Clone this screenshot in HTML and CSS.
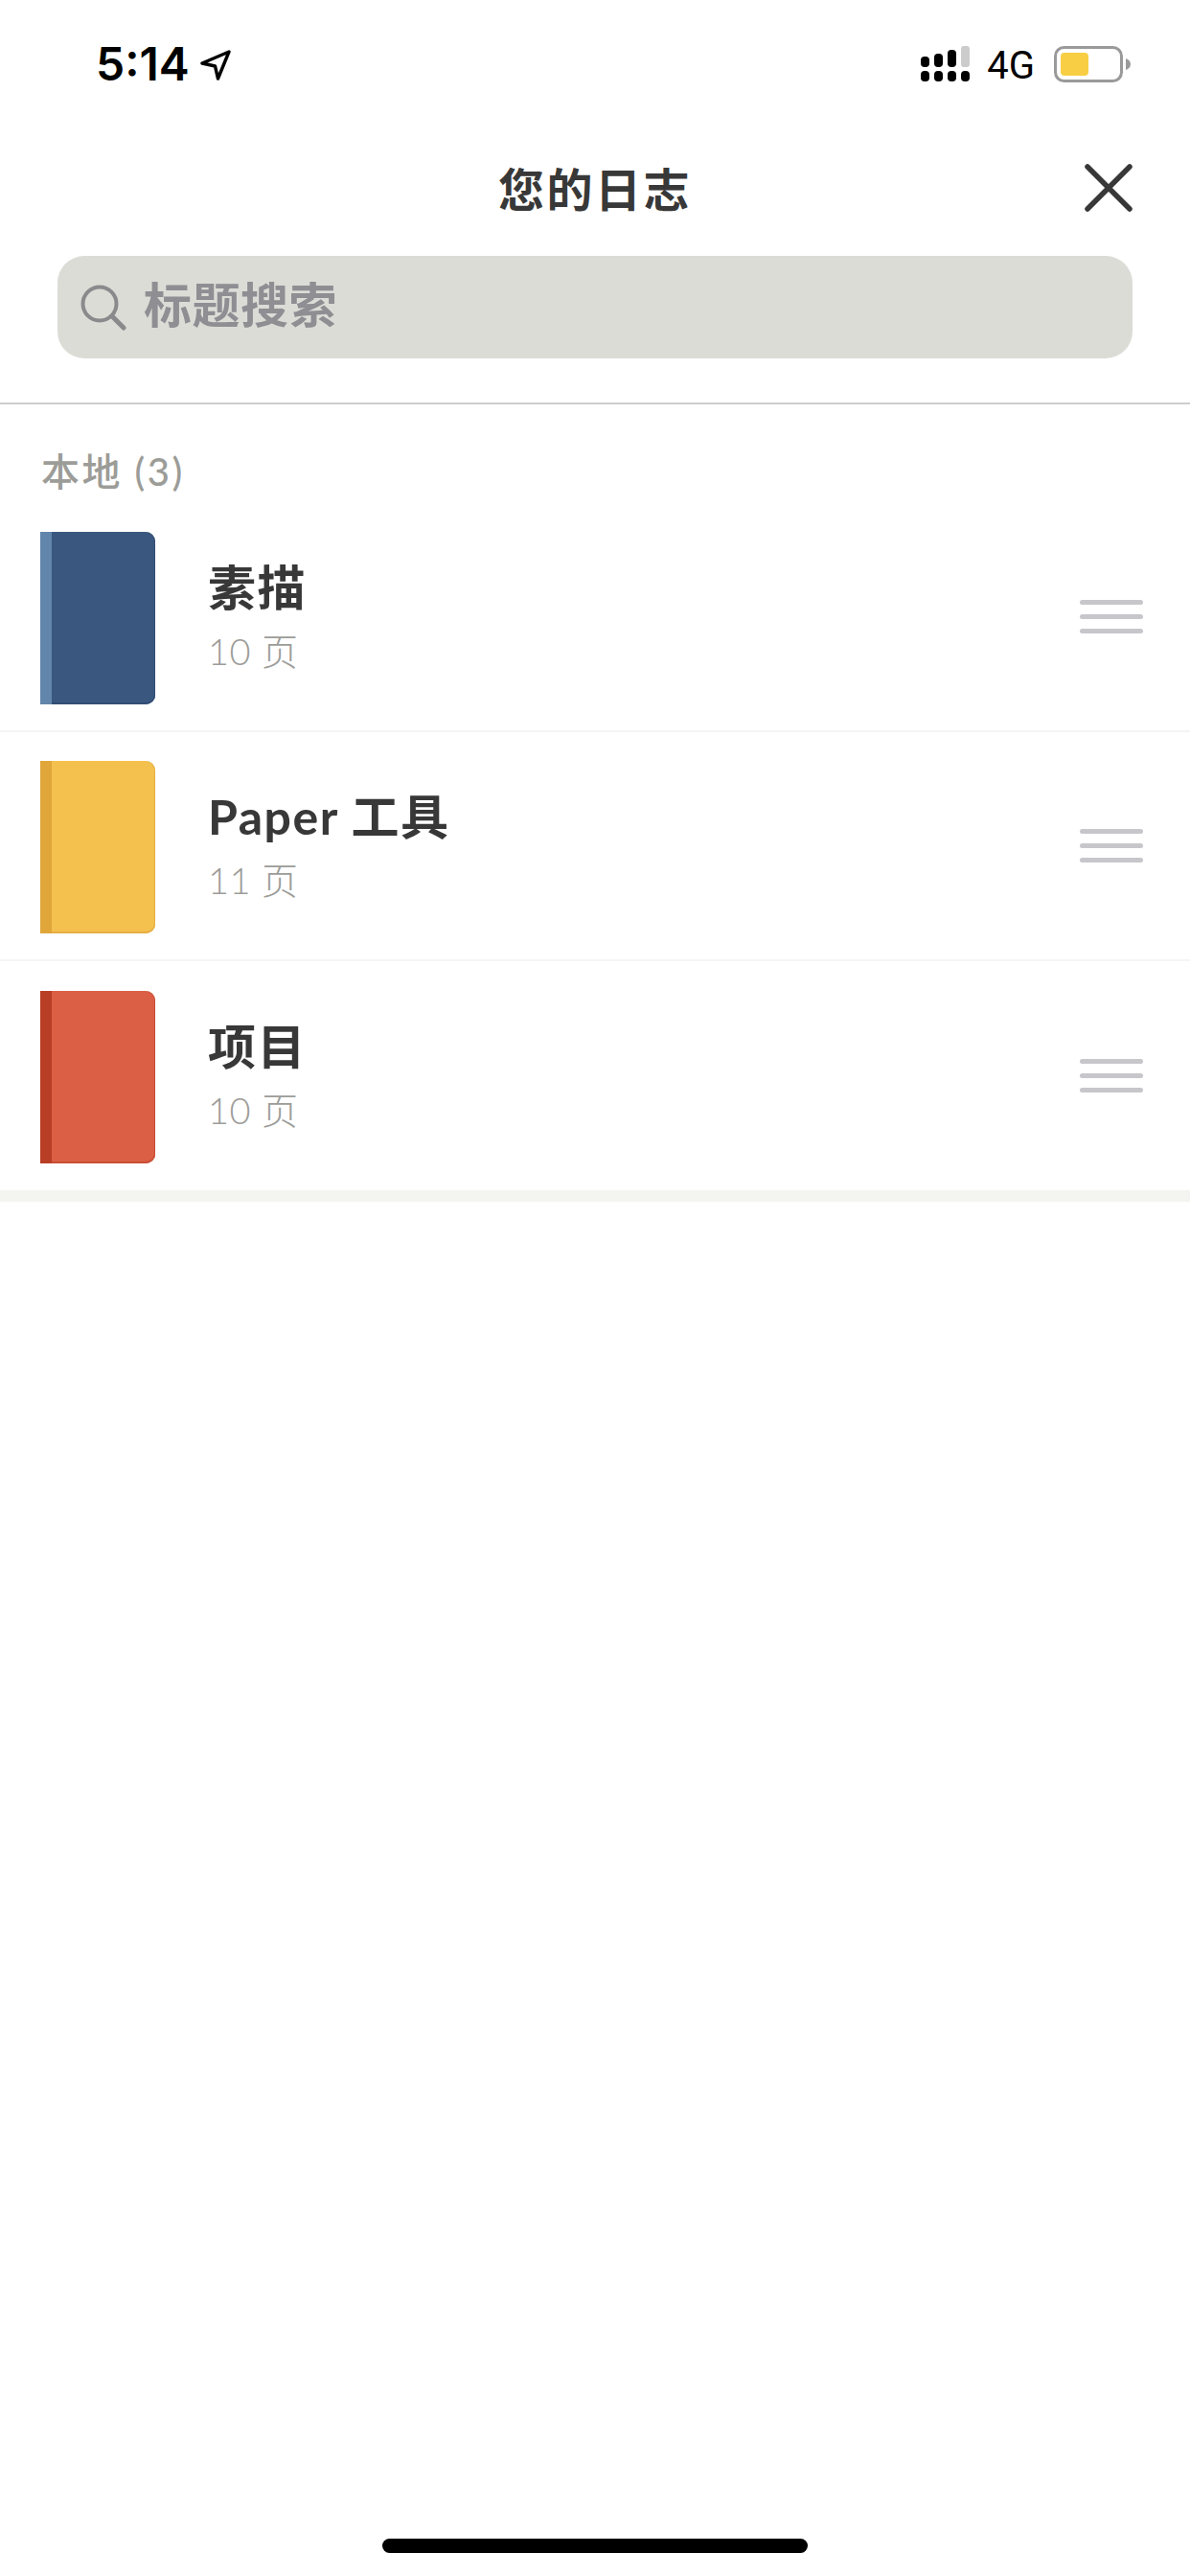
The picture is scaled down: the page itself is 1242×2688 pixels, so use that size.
FILE: index.html
```html
<!DOCTYPE html>
<html lang="zh-CN">
<head>
  <meta charset="UTF-8">
  <meta name="viewport" content="width=device-width, initial-scale=1">
  <title>您的日志</title>
  <link rel="stylesheet" href="styles.css">
</head>
<body>
  <div class="screen">
    <div class="status-bar">
      <div class="status-left">
        <span class="time">5:14</span>
        <svg class="location" width="32" height="32" viewBox="0 0 32 32">
          <path d="M30 2 L2 14 L15.5 17 L18.5 30 Z" fill="none" stroke="#000" stroke-width="3.4" stroke-linejoin="round"/>
        </svg>
      </div>
      <div class="status-right">
        <svg class="signal" width="51" height="38" viewBox="0 0 51 38">
          <rect x="0" y="11" width="9" height="11" rx="4" fill="#000"/>
          <rect x="14" y="8" width="9" height="14" rx="4" fill="#000"/>
          <rect x="28" y="4" width="9" height="18" rx="4" fill="#000"/>
          <rect x="42" y="0" width="9" height="22" rx="3" fill="#ccc"/>
          <rect x="0" y="26" width="9" height="11" rx="4" fill="#000"/>
          <rect x="14" y="26" width="9" height="11" rx="4" fill="#000"/>
          <rect x="28" y="26" width="9" height="11" rx="4" fill="#000"/>
          <rect x="42" y="26" width="9" height="11" rx="4" fill="#000"/>
        </svg>
        <span class="network">4G</span>
        <svg class="battery" width="80" height="38" viewBox="0 0 80 38">
          <rect x="1.5" y="1.5" width="69" height="35" rx="9" fill="#fff" stroke="#9a9a9a" stroke-width="3"/>
          <rect x="7" y="7" width="29" height="24" rx="4" fill="#f8cf44"/>
          <path d="M75 13 C78 14 80 16 80 19 C80 22 78 24 75 25 Z" fill="#9a9a9a"/>
        </svg>
      </div>
    </div>

    <div class="header">
      <span></span>
      <h1 class="title">您的日志</h1>
      <svg class="close" width="50" height="50" viewBox="0 0 50 50">
        <path d="M3 3 L47 47 M47 3 L3 47" stroke="#383838" stroke-width="5.5" stroke-linecap="round"/>
      </svg>
    </div>

    <div class="search">
      <svg class="search-icon" width="48" height="48" viewBox="0 0 48 48">
        <circle cx="20" cy="20" r="17.5" fill="none" stroke="#8a8a8c" stroke-width="4"/>
        <path d="M33 33 L45 45" stroke="#8a8a8c" stroke-width="5" stroke-linecap="round"/>
      </svg>
      <span class="search-text">标题搜索</span>
    </div>

    <div class="section-label">本地 (3)</div>

    <div class="row">
      <div class="book book-blue"></div>
      <div class="info">
        <div class="name">素描</div>
        <div class="pages">10 页</div>
      </div>
      <div class="handle"><i></i><i></i><i></i></div>
    </div>
    <div class="row">
      <div class="book book-yellow"></div>
      <div class="info">
        <div class="name">Paper 工具</div>
        <div class="pages">11 页</div>
      </div>
      <div class="handle"><i></i><i></i><i></i></div>
    </div>
    <div class="row row-last">
      <div class="book book-red"></div>
      <div class="info">
        <div class="name">项目</div>
        <div class="pages">10 页</div>
      </div>
      <div class="handle"><i></i><i></i><i></i></div>
    </div>
    <div class="section-end"></div>

    <div class="spacer"></div>
    <div class="home-bar"></div>
  </div>
</body>
</html>
```

FILE: styles.css
```css
* {
  box-sizing: border-box;
}
html, body {
  margin: 0;
  padding: 0;
  background: #fff;
}
body {
  font-family: Lato, "Noto Sans CJK SC", sans-serif;
  color: #383838;
}
.screen {
  width: 1242px;
  height: 2688px;
  display: flex;
  flex-direction: column;
  overflow: hidden;
}

/* status bar */
.status-bar {
  height: 166px;
  padding: 48px 62px 0 100px;
  display: flex;
  justify-content: space-between;
  align-items: flex-start;
}
.status-left {
  display: flex;
  align-items: center;
  height: 38px;
  color: #000;
}
.time {
  font-family: Inter, sans-serif;
  font-size: 48px;
  font-weight: 600;
  line-height: 38px;
}
.location {
  margin-left: 11px;
  margin-top: 2px;
}
.status-right {
  display: flex;
  align-items: flex-start;
}
.network {
  font-family: Roboto, sans-serif;
  font-size: 40px;
  line-height: 38px;
  margin: 2px 20px 0 18px;
  color: #000;
}

/* title */
.header {
  display: grid;
  grid-template-columns: 1fr auto 1fr;
  align-items: center;
  height: 64px;
  padding: 0 60px 0 60px;
}
.title {
  margin: 0;
  font-size: 48px;
  font-weight: 700;
  letter-spacing: 2.5px;
  line-height: 64px;
}
.close {
  justify-self: end;
  margin-top: -4px;
}

/* search */
.search {
  margin: 37px 60px 0;
  height: 107px;
  background: #dcdcd7;
  border-radius: 28px;
  display: flex;
  align-items: center;
  padding-left: 24px;
}
.search-text {
  margin-left: 18px;
  margin-top: -12px;
  font-size: 50px;
  font-weight: 700;
  letter-spacing: 0.5px;
  color: #8e8e93;
}

.section-label {
  margin-top: 46px;
  padding: 46px 0 9px 43px;
  border-top: 2px solid #cdcdcd;
  font-size: 40px;
  font-weight: 500;
  line-height: 48px;
  letter-spacing: 2.5px;
  color: #9c9c98;
}

/* journals */
.row {
  display: flex;
  align-items: center;
  padding: 30px 49px 28px 42px;
  height: 239px;
  border-bottom: 2px solid #f5f5f3;
}
.row-last {
  border-bottom: none;
}
.book {
  width: 120px;
  height: 180px;
  flex: none;
  border-radius: 0 10px 10px 0;
  border-left: 12px solid;
}
.book-blue {
  background: #3a587f;
  border-left-color: #6286ab;
  box-shadow: inset 0 -2px 0 #324d74, inset -1px 0 0 #324d74;
}
.book-yellow {
  background: #f4c14f;
  border-left-color: #e0a63a;
  box-shadow: inset 0 -2px 0 #e5ae42, inset -1px 0 0 #e5ae42;
}
.book-red {
  background: #db5f44;
  border-left-color: #b83e25;
  box-shadow: inset 0 -2px 0 #c84e36, inset -1px 0 0 #c84e36;
}
.info {
  flex: 1;
  margin-left: 55px;
  margin-top: -4px;
}
.name {
  font-size: 50px;
  font-weight: 700;
  line-height: 64px;
  letter-spacing: 1.5px;
}
.pages {
  font-size: 38px;
  font-weight: 300;
  line-height: 50px;
  margin-top: 9px;
  letter-spacing: 0.5px;
  color: #9c9c98;
}
.handle {
  width: 66px;
  display: flex;
  flex-direction: column;
  gap: 10px;
  margin-top: -2px;
}
.handle i {
  display: block;
  height: 5px;
  border-radius: 3px;
  background: #c7c7cb;
}
.section-end {
  height: 12px;
  background: #f4f4f0;
}

.spacer {
  flex: 1;
}
.home-bar {
  align-self: center;
  width: 444px;
  height: 15px;
  margin-bottom: 24px;
  border-radius: 8px;
  background: #000;
}
```
